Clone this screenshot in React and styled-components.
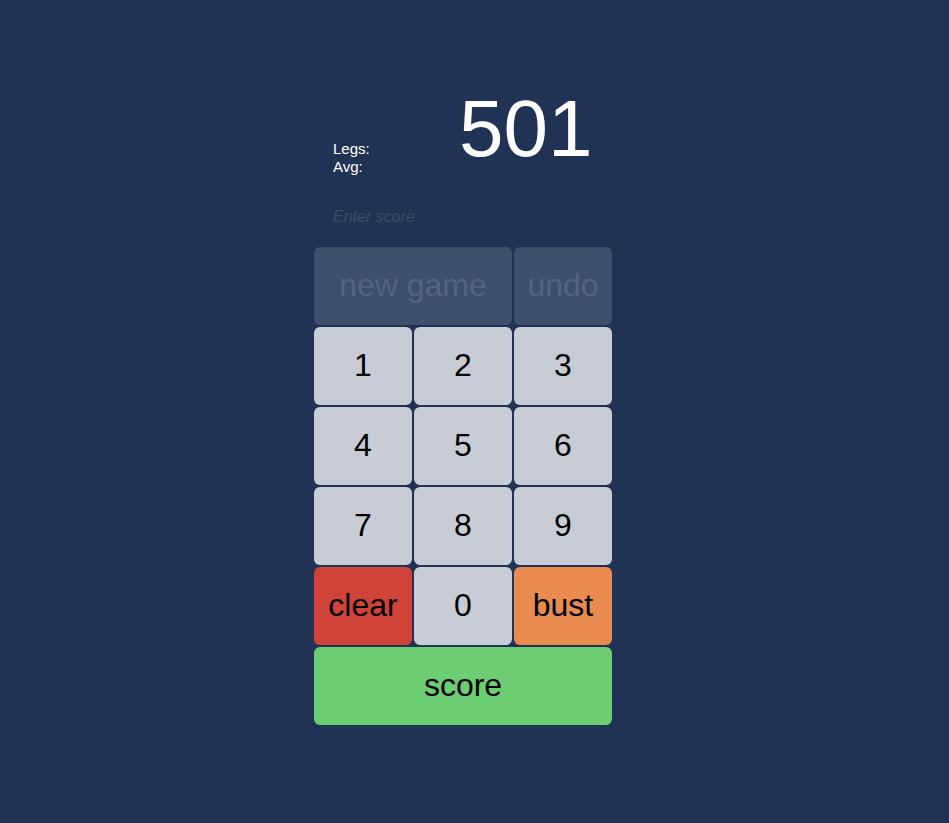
import React, { useState } from "react";
import styled, { createGlobalStyle } from "styled-components";

const Global = createGlobalStyle`
  html, body { margin: 0; padding: 0; background: #213354; }
  body { font-family: "Liberation Sans", Arial, sans-serif; min-height: 823px; }
`;

const Page = styled.div`
  width: 321px;
  margin: 0 auto;
  padding-top: 80px;
`;

const Header = styled.div`
  display: flex;
  align-items: flex-end;
`;

const Stats = styled.div`
  width: 127px;
  padding-left: 19px;
  box-sizing: border-box;
  color: #ffffff;
  font-size: 15px;
  line-height: 17.5px;
  padding-bottom: 1px;
`;

const Remaining = styled.div`
  color: #ffffff;
  font-size: 80px;
  line-height: 94px;
  padding-top: 2px;
  margin-left: 18px;
`;

const ScoreInput = styled.input`
  display: block;
  box-sizing: border-box;
  margin: 32px 0 21px 19px;
  padding: 0;
  width: 260px;
  height: 18px;
  border: none;
  outline: none;
  background: transparent;
  color: #ffffff;
  font-family: "Liberation Sans", Arial, sans-serif;
  font-size: 16px;
  font-style: italic;
  &::placeholder { color: #3b4c6a; opacity: 1; }
`;

const Pad = styled.div`
  display: grid;
  grid-template-columns: repeat(3, 98px);
  grid-auto-rows: 78px;
  gap: 2px;
  width: 298px;
`;

const variants = {
  muted: { bg: "#3e4f6b", fg: "#56657f" },
  digit: { bg: "#c8cdd5", fg: "#000000" },
  danger: { bg: "#cf4339", fg: "#000000" },
  warn: { bg: "#e98b4f", fg: "#000000" },
  go: { bg: "#6ccd72", fg: "#000000" },
};

const Key = styled.button`
  grid-column: span ${(p) => p.$span || 1};
  border: none;
  border-radius: 6px;
  margin: 0;
  padding: 0 0 2px;
  background: ${(p) => variants[p.$variant].bg};
  color: ${(p) => variants[p.$variant].fg};
  font-family: "Liberation Sans", Arial, sans-serif;
  font-size: 32px;
  cursor: pointer;
`;

export default function App() {
  const [value, setValue] = useState("");
  const digits = ["1", "2", "3", "4", "5", "6", "7", "8", "9"];
  return (
    <>
      <Global />
      <Page>
        <Header>
          <Stats>
            <div>Legs:</div>
            <div>Avg:</div>
          </Stats>
          <Remaining>501</Remaining>
        </Header>
        <ScoreInput
          placeholder="Enter score"
          value={value}
          onChange={(e) => setValue(e.target.value)}
        />
        <Pad>
          <Key $variant="muted" $span={2}>new game</Key>
          <Key $variant="muted">undo</Key>
          {digits.map((d) => (
            <Key key={d} $variant="digit" onClick={() => setValue(value + d)}>
              {d}
            </Key>
          ))}
          <Key $variant="danger" onClick={() => setValue("")}>clear</Key>
          <Key $variant="digit" onClick={() => setValue(value + "0")}>0</Key>
          <Key $variant="warn">bust</Key>
          <Key $variant="go" $span={3}>score</Key>
        </Pad>
      </Page>
    </>
  );
}
